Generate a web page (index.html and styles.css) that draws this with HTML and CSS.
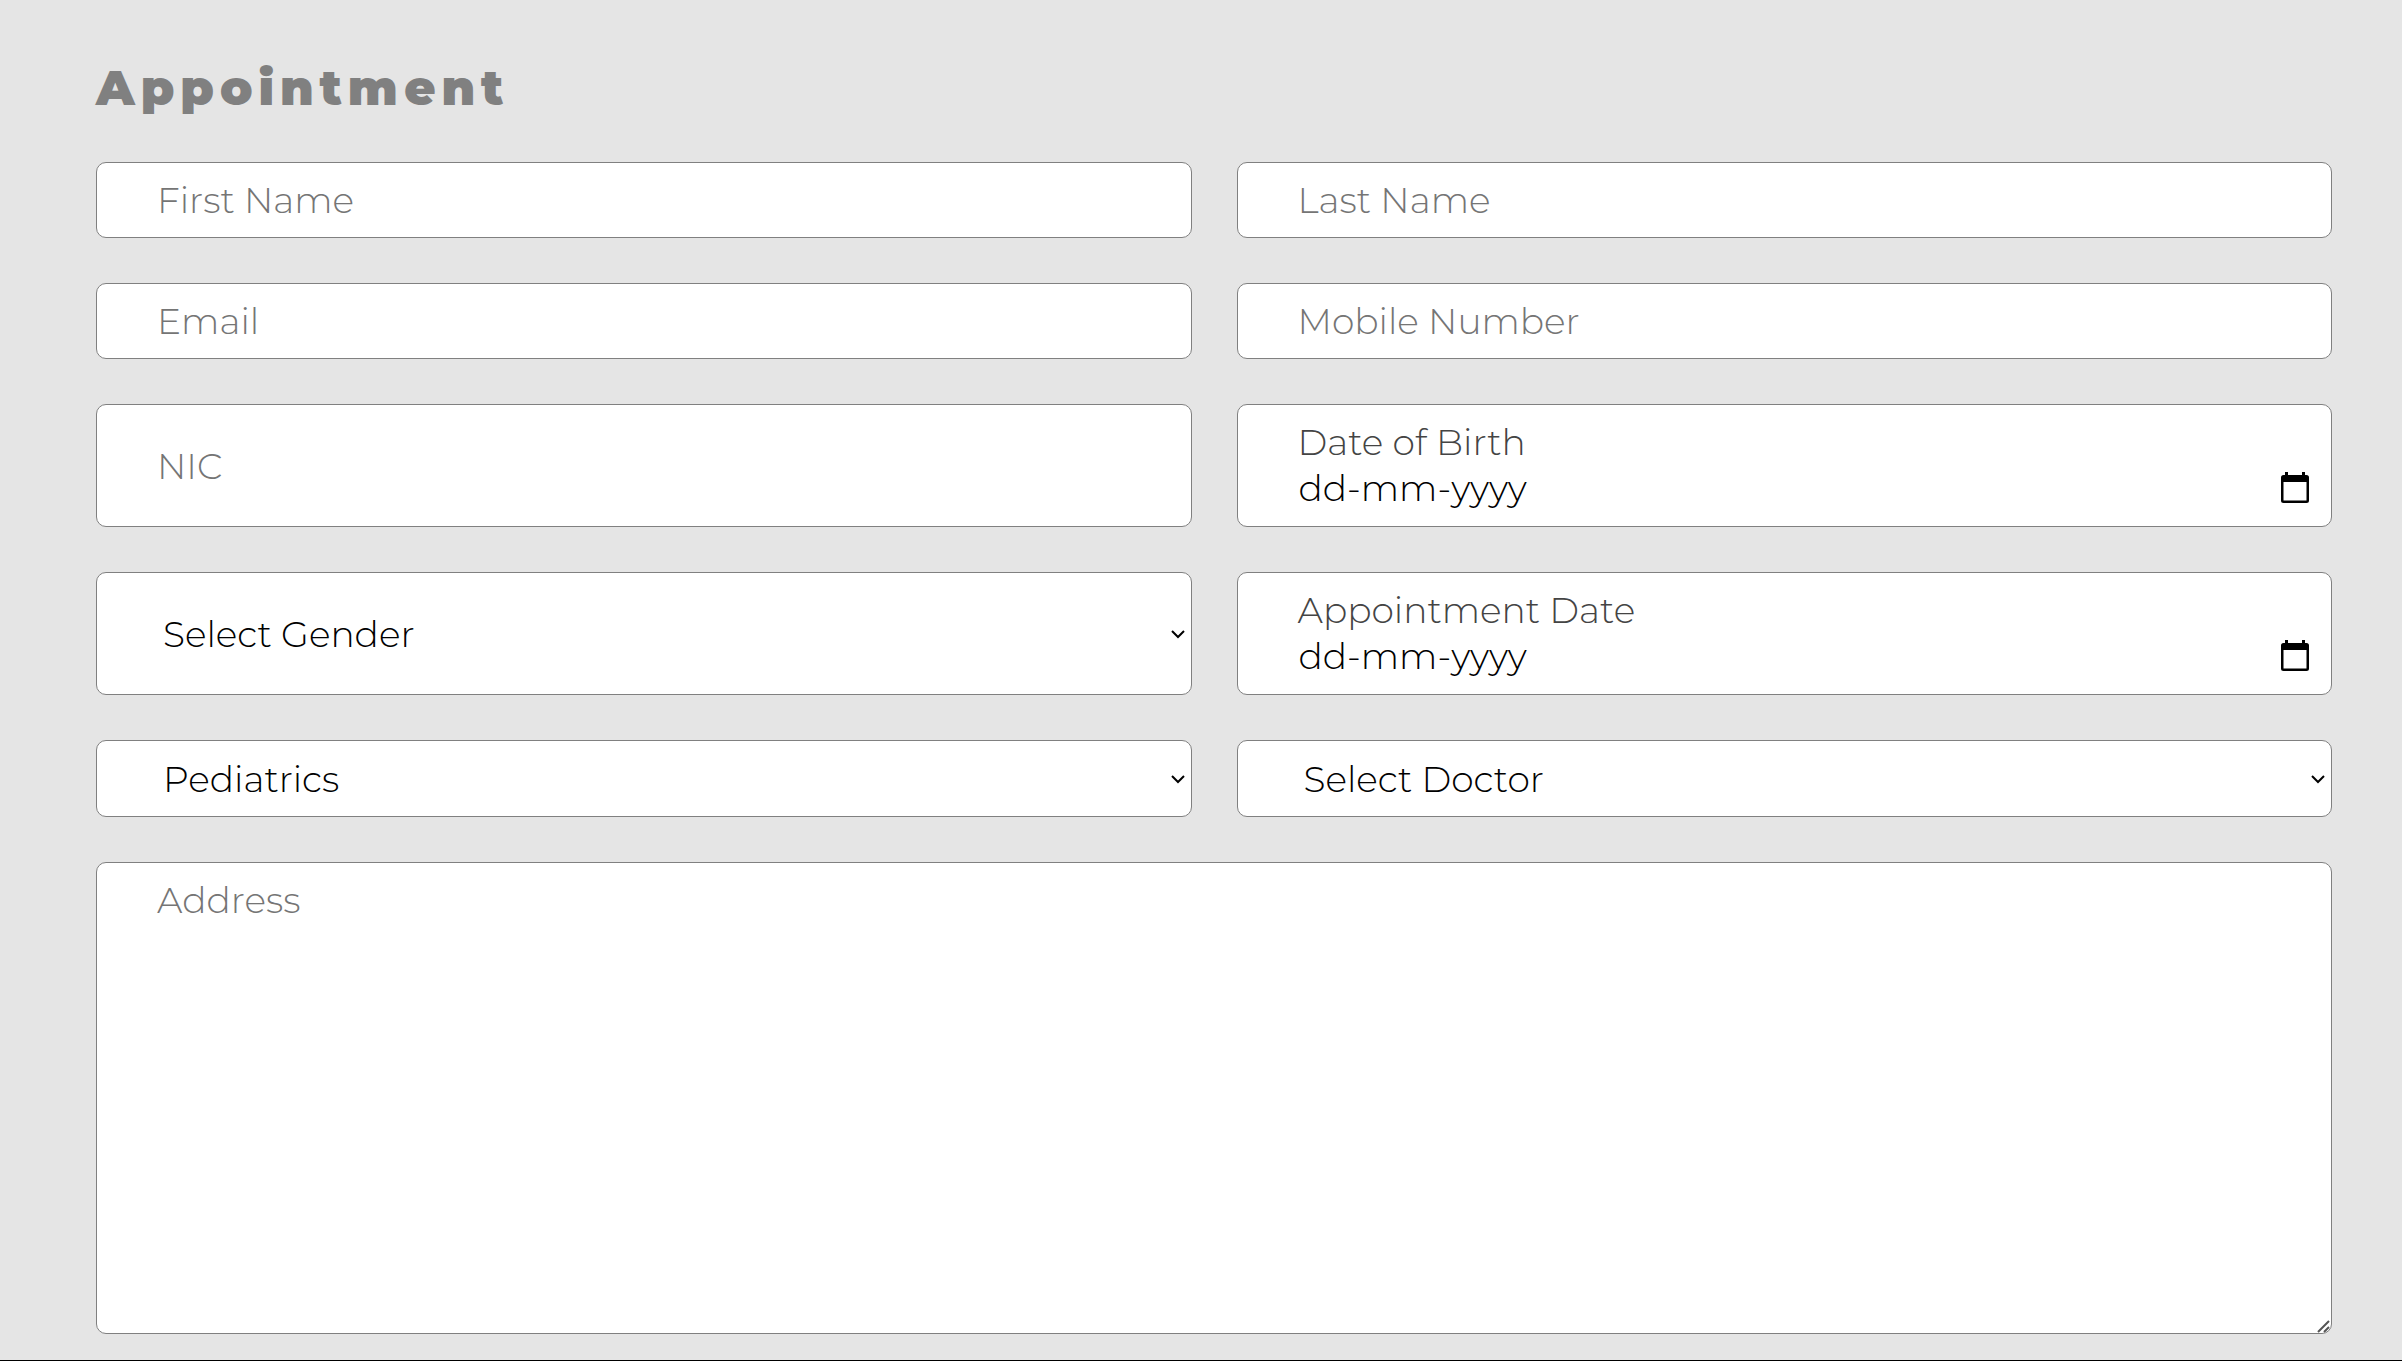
FILE: index.html
```html
<!DOCTYPE html>
<html lang="en">
<head>
    <meta charset="UTF-8">
    <meta name="viewport" content="width=device-width, initial-scale=1.0">
    <title>Appointment</title>
    <link rel="stylesheet" href="styles.css">
</head>
<body>
    <main class="appointment">
        <h1 class="title">Appointment</h1>

        <form class="appointment-form">
            <div class="row">
                <input class="field" type="text" placeholder="First Name" aria-label="First Name">
                <input class="field" type="text" placeholder="Last Name" aria-label="Last Name">
            </div>

            <div class="row">
                <input class="field" type="email" placeholder="Email" aria-label="Email">
                <input class="field" type="tel" placeholder="Mobile Number" aria-label="Mobile Number">
            </div>

            <div class="row">
                <input class="field" type="text" placeholder="NIC" aria-label="NIC">
                <div class="field date-field">
                    <label for="dob">Date of Birth</label>
                    <div class="date-line">
                        <input id="dob" type="text" placeholder="dd-mm-yyyy">
                        <button type="button" aria-label="Pick date of birth">
                            <svg width="28" height="32" viewBox="0 0 28 32">
                                <path fill-rule="evenodd" d="M4 0h3v3h14V0h3v3h1.500a2.500 2.500 0 0 1 2.500 2.500v23a2.500 2.500 0 0 1-2.500 2.500h-23A2.500 2.500 0 0 1 0 28.500v-23A2.500 2.500 0 0 1 2.500 3H4zM2.500 10v18.500h23V10z"/>
                            </svg>
                        </button>
                    </div>
                </div>
            </div>

            <div class="row">
                <div class="select-box">
                    <select class="field" aria-label="Gender">
                        <option>Select Gender</option>
                        <option>Male</option>
                        <option>Female</option>
                    </select>
                    <svg class="arrow" width="14" height="9" viewBox="0 0 14 9"><path d="M1 1l6 6 6-6"/></svg>
                </div>
                <div class="field date-field">
                    <label for="appointmentDate">Appointment Date</label>
                    <div class="date-line">
                        <input id="appointmentDate" type="text" placeholder="dd-mm-yyyy">
                        <button type="button" aria-label="Pick appointment date">
                            <svg width="28" height="32" viewBox="0 0 28 32">
                                <path fill-rule="evenodd" d="M4 0h3v3h14V0h3v3h1.500a2.500 2.500 0 0 1 2.500 2.500v23a2.500 2.500 0 0 1-2.500 2.500h-23A2.500 2.500 0 0 1 0 28.500v-23A2.500 2.500 0 0 1 2.500 3H4zM2.500 10v18.500h23V10z"/>
                            </svg>
                        </button>
                    </div>
                </div>
            </div>

            <div class="row">
                <div class="select-box">
                    <select class="field" aria-label="Department">
                        <option>Pediatrics</option>
                        <option>Orthopedics</option>
                        <option>Cardiology</option>
                    </select>
                    <svg class="arrow" width="14" height="9" viewBox="0 0 14 9"><path d="M1 1l6 6 6-6"/></svg>
                </div>
                <div class="select-box">
                    <select class="field" aria-label="Doctor">
                        <option>Select Doctor</option>
                    </select>
                    <svg class="arrow" width="14" height="9" viewBox="0 0 14 9"><path d="M1 1l6 6 6-6"/></svg>
                </div>
            </div>

            <div class="address-box">
                <textarea class="field" placeholder="Address" aria-label="Address"></textarea>
                <svg class="grip" width="13" height="13" viewBox="0 0 13 13"><path d="M1 12L12 1M7 12l5-5"/></svg>
            </div>
        </form>
    </main>
</body>
</html>
```
FILE: styles.css
```css
* {
    box-sizing: border-box;
}

body {
    margin: 0;
    background-color: #e5e5e5;
    font-family: Montserrat, Inter, sans-serif;
    font-weight: 300;
}

.appointment {
    display: flex;
    flex-direction: column;
    min-height: 100vh;
    padding: 56px 70px 26px 96px;
    border-bottom: 1px solid #000;
}

.title {
    margin: 0 0 42px;
    font-size: 48px;
    font-weight: 900;
    line-height: 64px;
    letter-spacing: 6px;
    color: gray;
}

.appointment-form {
    display: flex;
    flex: 1;
    flex-direction: column;
    gap: 45px;
}

.row {
    display: grid;
    grid-template-columns: 1fr 1fr;
    gap: 45px;
}

.field {
    width: 100%;
    min-width: 0;
    margin: 0;
    padding: 14px 60px;
    border: 1px solid gray;
    border-radius: 10px;
    background-color: #fff;
    color: #000;
    font: inherit;
    font-size: 36px;
    line-height: 46px;
}

input.field {
    min-height: 76px;
}

input::placeholder,
textarea::placeholder {
    color: #757575;
    opacity: 1;
}

.date-field {
    padding: 14px 22px 15px 60px;
}

.date-field label {
    display: block;
    color: #444;
}

.date-line {
    display: flex;
    align-items: center;
}

.date-line input {
    flex: 1;
    min-width: 0;
    height: 46px;
    padding: 0 1px;
    border: none;
    font: inherit;
}

.date-line input::placeholder {
    color: #000;
}

.date-line button {
    display: flex;
    padding: 0;
    border: none;
    background: none;
}

.select-box {
    display: grid;
    position: relative;
}

.select-box select {
    min-height: 77px;
    padding-left: 66px;
    appearance: none;
}

.arrow {
    position: absolute;
    top: 50%;
    right: 7px;
    margin-top: -4px;
    fill: none;
    stroke: #000;
    stroke-width: 2;
    pointer-events: none;
}

.address-box {
    display: flex;
    flex: 1;
    position: relative;
}

.address-box textarea {
    min-height: 240px;
    resize: none;
}

.grip {
    position: absolute;
    right: 2px;
    bottom: 1px;
    stroke: #555;
    stroke-width: 2;
    pointer-events: none;
}

@media (max-width: 768px) {
    .row {
        grid-template-columns: 1fr;
    }
}
```
